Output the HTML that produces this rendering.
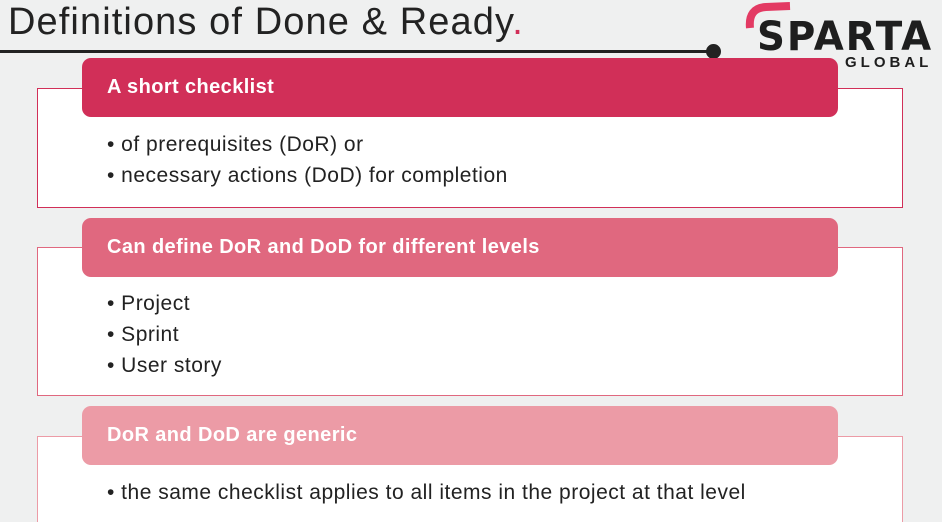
<!DOCTYPE html>
<html style="overflow:hidden"><head><style>
html,body{margin:0;width:942px;height:522px;overflow:hidden}
body{background:#eff0f0;position:relative;font-family:"Liberation Sans",sans-serif;}
.t{position:absolute;left:8px;top:1px;font-size:38px;color:#222;letter-spacing:1.1px;white-space:nowrap}
.line{position:absolute;left:0;top:50px;width:712px;height:3px;background:#222}
.dot{position:absolute;left:706px;top:44px;width:15px;height:15px;border-radius:50%;background:#222}
.box{position:absolute;left:37px;width:864px;background:#fff;border:1px solid}
.hd{position:absolute;left:82px;width:756px;height:59px;border-radius:9px;color:#fff;font-weight:bold;font-size:20px;letter-spacing:0.4px;line-height:59px;padding-left:25px;box-sizing:border-box}
.li{position:absolute;left:107px;font-size:21px;letter-spacing:0.5px;color:#222;white-space:nowrap}
.logo{position:absolute;left:757px;top:14px;font-weight:bold;font-size:40px;color:#1e1e1e;letter-spacing:2px;font-family:"DejaVu Sans",sans-serif;transform:scaleX(0.97);transform-origin:left}
.gl{position:absolute;left:845px;top:54px;font-weight:bold;font-size:15px;color:#1e1e1e;letter-spacing:4px}
</style></head><body>
<div class="t">Definitions of Done &amp; Ready<span style="color:#d12f58">.</span></div>
<div class="line"></div><div class="dot"></div>
<svg style="position:absolute;left:740px;top:2px" width="52" height="28"><path d="M10 26 Q8 6 26 5 L50 4" stroke="#e33a63" stroke-width="8" fill="none"/></svg>
<div class="logo">SPARTA</div>
<div class="gl">GLOBAL</div>

<div class="box" style="top:88px;height:118px;border-color:#d12f58"></div>
<div class="hd" style="top:58px;background:#d12f58">A short checklist</div>
<div class="li" style="top:133px">• of prerequisites (DoR) or</div>
<div class="li" style="top:164px">• necessary actions (DoD) for completion</div>

<div class="box" style="top:247px;height:147px;border-color:#e0687f"></div>
<div class="hd" style="top:218px;background:#e0687f">Can define DoR and DoD for different levels</div>
<div class="li" style="top:292px">• Project</div>
<div class="li" style="top:323px">• Sprint</div>
<div class="li" style="top:354px">• User story</div>

<div class="box" style="top:436px;height:100px;border-color:#ec9ba6"></div>
<div class="hd" style="top:406px;background:#ec9ba6">DoR and DoD are generic</div>
<div class="li" style="top:481px">• the same checklist applies to all items in the project at that level</div>
</body></html>
